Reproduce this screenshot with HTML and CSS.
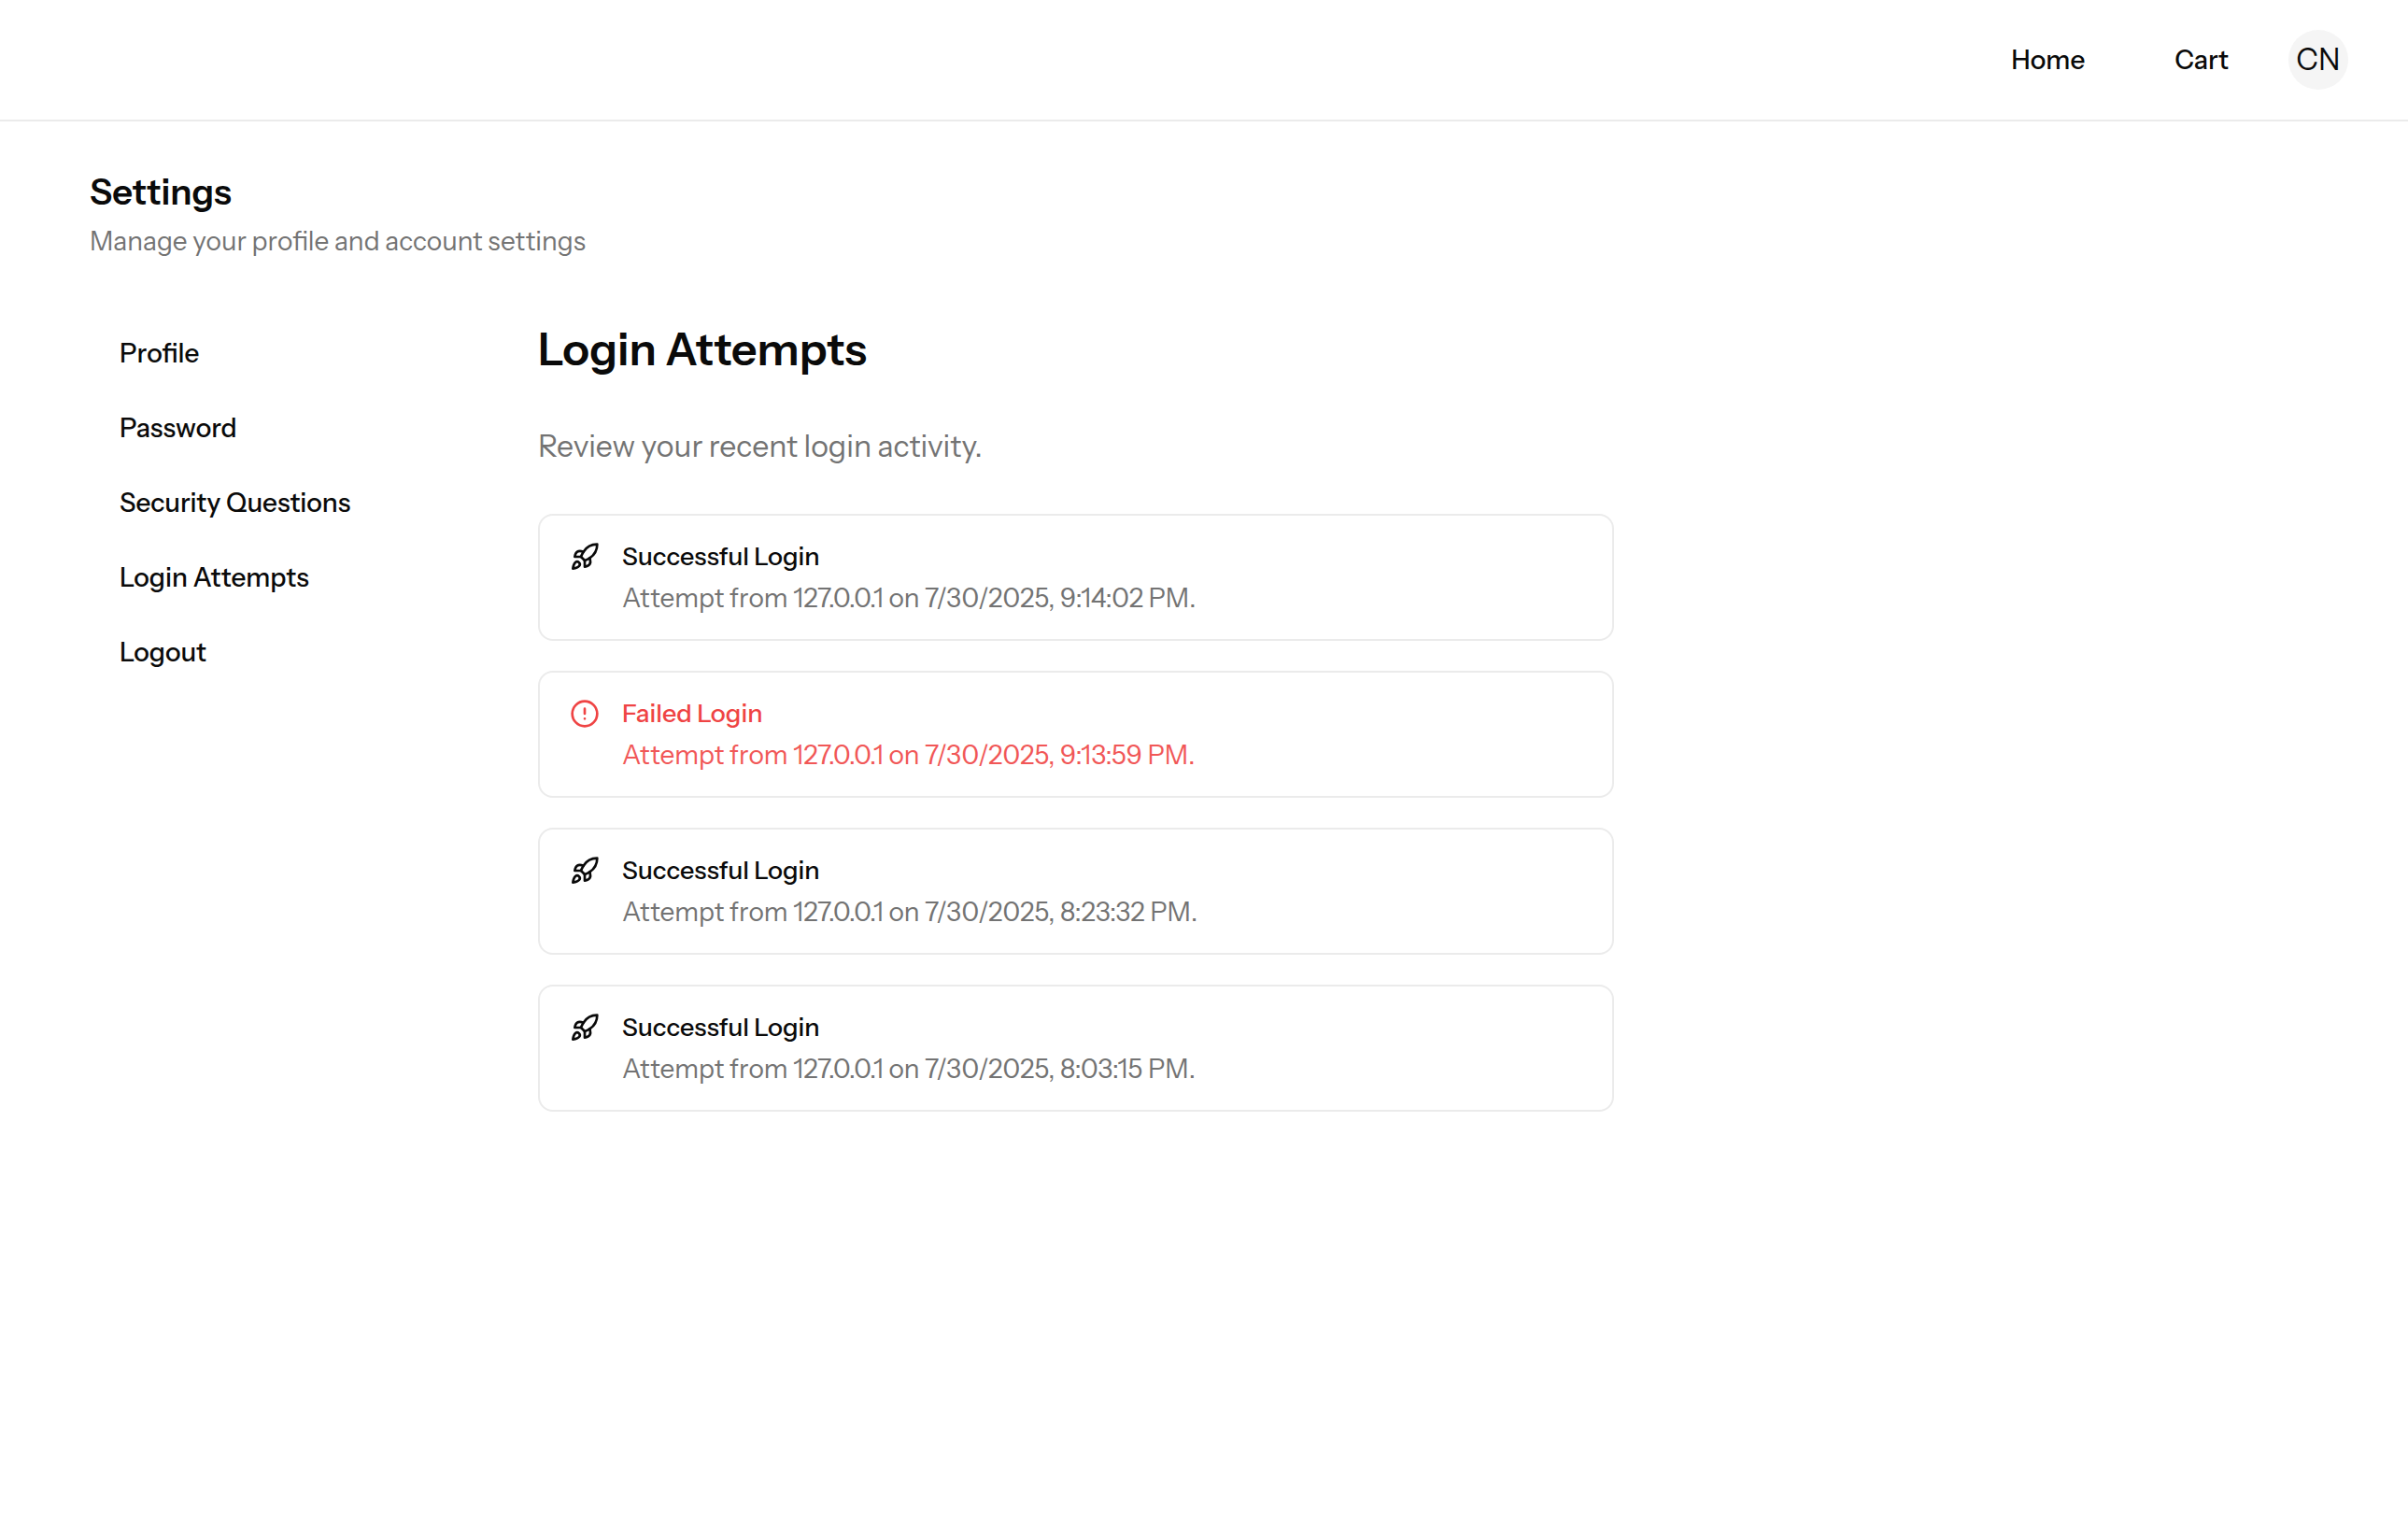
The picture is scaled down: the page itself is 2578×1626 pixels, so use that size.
FILE: index.html
```html
<!DOCTYPE html>
<html lang="en">
<head>
<meta charset="utf-8">
<meta name="viewport" content="width=device-width, initial-scale=1">
<title>Login Attempts</title>
<link rel="stylesheet" href="styles.css">
</head>
<body>
<svg class="sprite" aria-hidden="true">
  <symbol id="rocket" viewBox="0 0 24 24">
    <path d="M4.5 16.5c-1.5 1.26-2 5-2 5s3.740-.5 5-2c.71-.84.7-2.130-.09-2.910a2.180 2.180 0 0 0-2.910-.09z"/>
    <path d="m12 15-3-3a22 22 0 0 1 2-3.950A12.880 12.880 0 0 1 22 2c0 2.720-.78 7.500-6 11a22.350 22.350 0 0 1-4 2z"/>
    <path d="M9 12H4s.55-3.030 2-4c1.620-1.080 5 0 5 0"/>
    <path d="M12 15v5s3.030-.55 4-2c1.080-1.620 0-5 0-5"/>
  </symbol>
  <symbol id="alert" viewBox="0 0 24 24">
    <circle cx="12" cy="12" r="10"/>
    <path d="M12 8v4M12 16h.01"/>
  </symbol>
</svg>

<header class="topbar">
  <nav class="topnav" aria-label="Main">
    <a class="link" href="#home">Home</a>
    <a class="link" href="#cart">Cart</a>
  </nav>
  <button class="avatar" type="button" aria-label="CN, account menu">CN</button>
</header>

<main class="page">
  <div class="intro">
    <h1 class="intro-title">Settings</h1>
    <p class="intro-text">Manage your profile and account settings</p>
  </div>

  <div class="columns">
    <nav class="sidebar" aria-label="Settings">
      <a class="link" href="#profile">Profile</a>
      <a class="link" href="#password">Password</a>
      <a class="link" href="#questions">Security Questions</a>
      <a class="link" href="#attempts">Login Attempts</a>
      <a class="link" href="#logout">Logout</a>
    </nav>

    <section class="content">
      <h2 class="content-title">Login Attempts</h2>
      <p class="content-text">Review your recent login activity.</p>

      <ul class="attempts">
        <li class="alert">
          <svg class="icon" aria-hidden="true"><use href="#rocket"/></svg>
          <div class="alert-body">
            <h3 class="alert-title">Successful Login</h3>
            <p class="alert-text">Attempt from 127.0.0.1 on 7/30/2025, 9:14:02 PM.</p>
          </div>
        </li>
        <li class="alert alert-failed">
          <svg class="icon" aria-hidden="true"><use href="#alert"/></svg>
          <div class="alert-body">
            <h3 class="alert-title">Failed Login</h3>
            <p class="alert-text">Attempt from 127.0.0.1 on 7/30/2025, 9:13:59 PM.</p>
          </div>
        </li>
        <li class="alert">
          <svg class="icon" aria-hidden="true"><use href="#rocket"/></svg>
          <div class="alert-body">
            <h3 class="alert-title">Successful Login</h3>
            <p class="alert-text">Attempt from 127.0.0.1 on 7/30/2025, 8:23:32 PM.</p>
          </div>
        </li>
        <li class="alert">
          <svg class="icon" aria-hidden="true"><use href="#rocket"/></svg>
          <div class="alert-body">
            <h3 class="alert-title">Successful Login</h3>
            <p class="alert-text">Attempt from 127.0.0.1 on 7/30/2025, 8:03:15 PM.</p>
          </div>
        </li>
      </ul>
    </section>
  </div>
</main>
</body>
</html>
```
FILE: styles.css
```css
:root {
  --text: #0a0a0a;
  --muted: #737373;
  --line: #ebebeb;
  --danger: #ef4444;
}

* {
  box-sizing: border-box;
  margin: 0;
  padding: 0;
}

body {
  background: #fff;
  color: var(--text);
  font: 400 28px/40px "Instrument Sans", Inter, "Liberation Sans", sans-serif;
}

.sprite {
  display: none;
}

.topbar {
  display: flex;
  justify-content: flex-end;
  align-items: center;
  gap: 32px;
  padding: 32px 64px;
  border-bottom: 2px solid var(--line);
}

.topnav {
  display: flex;
  gap: 32px;
}

.link {
  padding: 16px 32px;
  color: inherit;
  font-weight: 500;
  text-decoration: none;
}

.topnav .link {
  padding-block: 0;
}

.avatar {
  width: 64px;
  height: 64px;
  border: 0;
  border-radius: 50%;
  background: #f5f5f5;
  color: inherit;
  font: inherit;
  font-size: 32px;
  text-align: center;
}

.page {
  padding: 48px 96px;
}

.intro {
  margin-bottom: 64px;
}

.intro-title {
  margin-bottom: 4px;
  font-size: 38px;
  font-weight: 600;
  line-height: 56px;
}

.intro-text,
.content-text {
  color: var(--muted);
}

.columns {
  display: flex;
  gap: 96px;
}

.sidebar {
  display: flex;
  flex: none;
  flex-direction: column;
  gap: 8px;
  width: 384px;
}

.content {
  flex: 1;
  max-width: 1152px;
}

.content-title {
  font-size: 48px;
  font-weight: 600;
  line-height: 64px;
}

.content-text {
  margin: 48px 0;
  font-size: 32px;
  line-height: 48px;
}

.attempts {
  display: flex;
  flex-direction: column;
  gap: 32px;
  list-style: none;
}

.alert {
  display: flex;
  gap: 24px;
  padding: 24px 32px;
  border: 2px solid var(--line);
  border-radius: 16px;
}

.icon {
  flex: none;
  width: 32px;
  height: 32px;
  margin-top: 4px;
  fill: none;
  stroke: currentColor;
  stroke-width: 2;
  stroke-linecap: round;
  stroke-linejoin: round;
}

.alert-title {
  margin-bottom: 4px;
  font-size: 27px;
  font-weight: 500;
}

.alert-text {
  color: var(--muted);
}

.alert-failed {
  color: var(--danger);
}

.alert-failed .alert-text {
  color: #f15757;
}
```
